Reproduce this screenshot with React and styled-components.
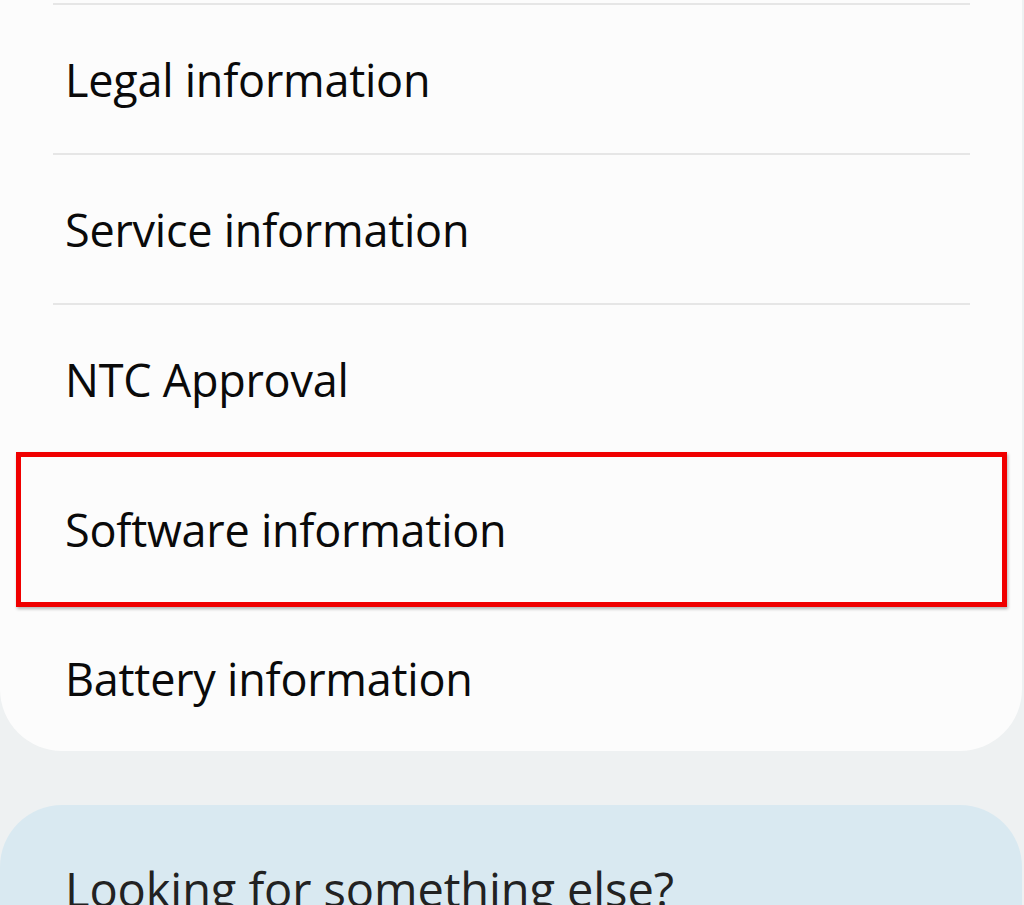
import styled, { createGlobalStyle } from 'styled-components'

const GlobalStyle = createGlobalStyle`
  html, body {
    margin: 0;
    padding: 0;
    background: #eef1f2;
    overflow: hidden;
  }
  body {
    font-family: "Open Sans", "Noto Sans", sans-serif;
  }
`;

const items = [
  { label: 'Legal information' },
  { label: 'Service information' },
  { label: 'NTC Approval' },
  { label: 'Software information', marked: true },
  { label: 'Battery information' },
];

function App() {
  return (
    <>
      <GlobalStyle />
      <Page>
        <Card>
          {items.map((item, i) => (
            <div key={item.label}>
              <Divider />
              <Row $marked={item.marked} $last={i === items.length - 1}>
                <Label>{item.label}</Label>
              </Row>
            </div>
          ))}
        </Card>
        <HelpCard>
          <HelpTitle>Looking for something else?</HelpTitle>
        </HelpCard>
      </Page>
    </>
  );
}

export default App;

const Page = styled.div`
  width: 1024px;
  height: 905px;
  display: flex;
  flex-direction: column;
  gap: 54px;
  padding-top: 3px;
  box-sizing: border-box;
`;

const Card = styled.div`
  width: 1022px;
  background: #fcfcfc;
  border-radius: 0 0 62px 62px;
  display: flex;
  flex-direction: column;
  margin-top: -3px;
  padding-top: 3px;
`;

const Divider = styled.div`
  height: 2px;
  margin: 0 52px 0 53px;
  background: #e6e6e6;
`;

const Row = styled.div`
  position: relative;
  height: ${(p) => (p.$last ? '146px' : '148px')};
  display: flex;
  align-items: center;
  padding-left: 65px;

  ${(p) =>
    p.$marked &&
    `
    &::after {
      content: '';
      position: absolute;
      top: -3px;
      bottom: -4px;
      left: 16px;
      right: 15px;
      border: 5px solid #f00000;
      box-shadow: 1px 2px 3px rgba(0, 0, 0, 0.28);
    }
  `}
`;

const Label = styled.span`
  font-size: 45px;
  color: #0a0a0a;
  letter-spacing: -0.25px;
  line-height: 1;
`;

const HelpCard = styled.div`
  width: 1022px;
  flex: 1;
  background: #d9e9f1;
  border-radius: 62px 62px 0 0;
  padding: 61px 0 0 65px;
  box-sizing: border-box;
`;

const HelpTitle = styled.div`
  font-size: 47px;
  color: #222;
  letter-spacing: -0.1px;
  line-height: 1;
`;
